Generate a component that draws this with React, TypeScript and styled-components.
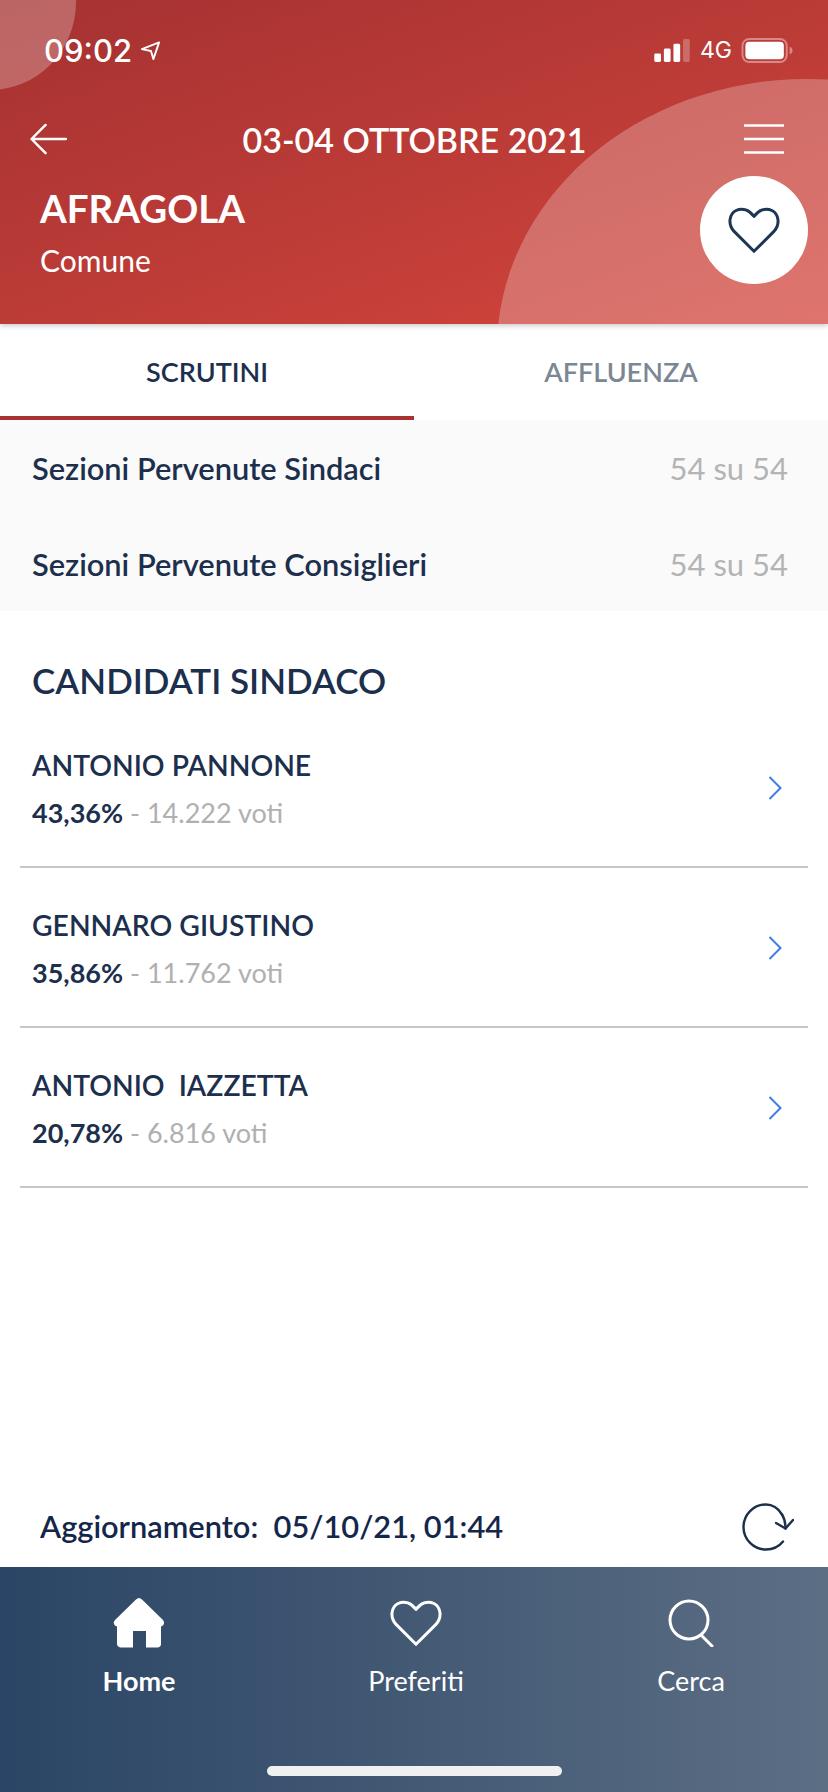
import styled, { createGlobalStyle } from "styled-components";

const candidates = [
  { name: "ANTONIO PANNONE", percent: "43,36%", votes: "14.222 voti" },
  { name: "GENNARO GIUSTINO", percent: "35,86%", votes: "11.762 voti" },
  { name: "ANTONIO  IAZZETTA", percent: "20,78%", votes: "6.816 voti" },
];

const GlobalStyle = createGlobalStyle`
  html, body {
    margin: 0;
    padding: 0;
    background: #fff;
  }
  * {
    box-sizing: border-box;
  }
`;

const LocationIcon = () => (
  <svg width="21" height="21" viewBox="0 0 22 22" fill="none">
    <path d="M2 9.500 20 2.500 14 20 11.500 11.500Z" stroke="#fff" strokeWidth="2" strokeLinejoin="round" />
  </svg>
);

const SignalIcon = () => (
  <svg width="37" height="23" viewBox="0 0 38 24">
    <rect x="0" y="15" width="7" height="9" rx="1.500" fill="#fff" />
    <rect x="10" y="10" width="7" height="14" rx="1.500" fill="#fff" />
    <rect x="20" y="5" width="7" height="19" rx="1.500" fill="#fff" />
    <rect x="30" y="0" width="7" height="24" rx="1.500" fill="#fff" fillOpacity="0.25" />
  </svg>
);

const BatteryIcon = () => (
  <svg width="53" height="25" viewBox="0 0 54 26">
    <rect x="1" y="1" width="46" height="24" rx="7" fill="none" stroke="#fff" strokeOpacity="0.4" strokeWidth="2" />
    <rect x="4" y="4" width="40" height="18" rx="4" fill="#fff" />
    <path d="M50 9c2 .5 3 2 3 4s-1 3.500-3 4z" fill="#fff" fillOpacity="0.4" />
  </svg>
);

const BackIcon = () => (
  <svg width="37" height="33" viewBox="0 0 38 34" fill="none">
    <path d="M37 16.500H2M16 2 1.500 16.500 16 31" stroke="#fff" strokeWidth="2.500" strokeLinecap="round" strokeLinejoin="round" />
  </svg>
);

const MenuIcon = () => (
  <svg width="40" height="30" viewBox="0 0 40 30">
    <path d="M0 1.500H40M0 15H40M0 28.500H40" stroke="#fff" strokeWidth="2.600" />
  </svg>
);

const HeartIcon = ({ size, color }: { size: number; color: string }) => (
  <svg width={size} height={size * 0.9} viewBox="0 0 52 47" fill="none">
    <path
      d="M26 44.500 6 24.500C-.5 17.500 1 7 8 3.500c6.500-3 13.500-.5 18 6 4.500-6.500 11.500-9 18-6 7 3.500 8.500 14 2 21z"
      stroke={color}
      strokeWidth="3"
      strokeLinejoin="round"
    />
  </svg>
);

const Chevron = () => (
  <svg width="14" height="24" viewBox="0 0 14 24" fill="none">
    <path d="M1.500 1 12.500 12 1.500 23" stroke="#3b7de0" strokeWidth="2" />
  </svg>
);

const RefreshIcon = () => (
  <svg width="52" height="48" viewBox="0 0 52 48" fill="none">
    <path d="M40 11.500C36 5 30 1.500 24 1.500 11.500 1.500 1.500 11.500 1.500 24S11.500 46.500 24 46.500c7 0 13-3 17-8" stroke="#1c2f4d" strokeWidth="2.400" strokeLinecap="round" />
    <path d="M51 17 43.500 25.500 34 20" stroke="#1c2f4d" strokeWidth="2.400" strokeLinecap="round" strokeLinejoin="round" />
    <path d="M40 11.500c2 3 3.500 8 3.500 14" stroke="#1c2f4d" strokeWidth="2.400" strokeLinecap="round" />
  </svg>
);

const HomeIcon = () => (
  <svg width="52" height="50" viewBox="0 0 52 50">
    <path
      d="M26 0c1 0 2 .500 3 1.500L50 22c2 2.500 1 6-2 6.500V46c0 2-1.500 3.500-3.500 3.500H33V33H20v16.500H8C6 49.500 4 48 4 46V28.500C1 28-.5 24.500 2 22L23 1.500C24 .500 25 0 26 0z"
      fill="#fff"
    />
  </svg>
);

const SearchIcon = () => (
  <svg width="46" height="48" viewBox="0 0 46 48" fill="none">
    <circle cx="21" cy="21" r="19" stroke="#fff" strokeWidth="3" />
    <path d="M33 36 44 47" stroke="#fff" strokeWidth="3" strokeLinecap="round" />
  </svg>
);

const App = () => {
  return (
    <Page>
      <GlobalStyle />
      <Header>
        <CornerBlob />
        <BigBlob />
        <StatusBar>
          <TimeGroup>
            <Time>09:02</Time>
            <LocationIcon />
          </TimeGroup>
          <StatusRight>
            <SignalIcon />
            <Network>4G</Network>
            <BatteryIcon />
          </StatusRight>
        </StatusBar>
        <TopNav>
          <BackIcon />
          <TopTitle>03-04 OTTOBRE 2021</TopTitle>
          <MenuIcon />
        </TopNav>
        <PlaceRow>
          <PlaceText>
            <PlaceName>AFRAGOLA</PlaceName>
            <PlaceType>Comune</PlaceType>
          </PlaceText>
          <FavButton>
            <HeartIcon size={52} color="#1c3654" />
          </FavButton>
        </PlaceRow>
      </Header>

      <Tabs>
        <Tab $active>SCRUTINI</Tab>
        <Tab>AFFLUENZA</Tab>
      </Tabs>

      <Summary>
        <SummaryRow>
          <SummaryLabel>Sezioni Pervenute Sindaci</SummaryLabel>
          <SummaryValue>54 su 54</SummaryValue>
        </SummaryRow>
        <SummaryRow>
          <SummaryLabel>Sezioni Pervenute Consiglieri</SummaryLabel>
          <SummaryValue>54 su 54</SummaryValue>
        </SummaryRow>
      </Summary>

      <Main>
        <SectionTitle>CANDIDATI SINDACO</SectionTitle>
        {candidates.map((c) => (
          <CandidateRow key={c.name}>
            <div>
              <CandidateName>{c.name}</CandidateName>
              <CandidateResult>
                <Percent>{c.percent}</Percent> - {c.votes}
              </CandidateResult>
            </div>
            <Chevron />
          </CandidateRow>
        ))}
      </Main>

      <UpdateBar>
        <UpdateText>Aggiornamento:&nbsp; 05/10/21, 01:44</UpdateText>
        <RefreshIcon />
      </UpdateBar>

      <BottomNav>
        <NavItem>
          <NavIconBox>
            <HomeIcon />
          </NavIconBox>
          <NavLabel $active>Home</NavLabel>
        </NavItem>
        <NavItem>
          <NavIconBox>
            <HeartIcon size={52} color="#fff" />
          </NavIconBox>
          <NavLabel>Preferiti</NavLabel>
        </NavItem>
        <NavItem>
          <NavIconBox>
            <SearchIcon />
          </NavIconBox>
          <NavLabel>Cerca</NavLabel>
        </NavItem>
        <HomeIndicator />
      </BottomNav>
    </Page>
  );
};

const font = `"Lato", "Noto Sans", sans-serif`;

const Page = styled.div`
  width: 828px;
  height: 1792px;
  display: flex;
  flex-direction: column;
  overflow: hidden;
  background: #fff;
  font-family: ${font};
`;

const Header = styled.header`
  position: relative;
  height: 324px;
  flex-shrink: 0;
  overflow: hidden;
  padding: 0 44px 0 30px;
  background: linear-gradient(160deg, #a53232 0%, #b93a36 45%, #d4463c 100%);
  box-shadow: 0 2px 5px rgba(0, 0, 0, 0.2);
  z-index: 1;
`;

const CornerBlob = styled.div`
  position: absolute;
  left: -96px;
  top: -86px;
  width: 172px;
  height: 176px;
  border-radius: 50%;
  background: rgba(255, 255, 255, 0.25);
`;

const BigBlob = styled.div`
  position: absolute;
  left: 497px;
  top: 79px;
  width: 620px;
  height: 540px;
  border-radius: 50%;
  background: rgba(255, 255, 255, 0.25);
`;

const StatusBar = styled.div`
  position: relative;
  display: flex;
  justify-content: space-between;
  align-items: center;
  height: 34px;
  margin: 33px -10px 0 0;
  padding-left: 14px;
`;

const TimeGroup = styled.div`
  display: flex;
  align-items: center;
  gap: 8px;
`;

const Time = styled.span`
  font-family: "Inter", sans-serif;
  font-size: 31px;
  font-weight: 500;
  color: #fff;
`;

const StatusRight = styled.div`
  display: flex;
  align-items: center;
  gap: 9px;
`;

const Network = styled.span`
  font-family: "Inter", sans-serif;
  font-size: 23px;
  color: #fff;
`;

const TopNav = styled.div`
  position: relative;
  display: flex;
  justify-content: space-between;
  align-items: center;
  height: 40px;
  margin-top: 52px;
`;

const TopTitle = styled.h1`
  margin: 0 0 0 18px;
  font-size: 34px;
  font-weight: 600;
  color: #fff;
`;

const PlaceRow = styled.div`
  position: relative;
  display: flex;
  justify-content: space-between;
  align-items: flex-start;
  margin: 17px -24px 0 10px;
`;

const PlaceText = styled.div`
  padding-top: 6px;
`;

const PlaceName = styled.div`
  font-size: 38.500px;
  font-weight: 700;
  line-height: 52px;
  color: #fff;
`;

const PlaceType = styled.div`
  font-size: 30px;
  line-height: 52px;
  color: #fff;
`;

const FavButton = styled.div`
  width: 108px;
  height: 108px;
  border-radius: 50%;
  background: #fff;
  display: flex;
  align-items: center;
  justify-content: center;
`;

const Tabs = styled.div`
  display: flex;
  height: 96px;
  flex-shrink: 0;
`;

const Tab = styled.div<{ $active?: boolean }>`
  flex: 1;
  display: flex;
  align-items: center;
  justify-content: center;
  padding-top: 2px;
  font-size: 27px;
  font-weight: 600;
  color: ${({ $active }) => ($active ? "#1c2f4d" : "#7b8794")};
  border-bottom: 4px solid ${({ $active }) => ($active ? "#a83232" : "transparent")};
`;

const Summary = styled.section`
  height: 191px;
  flex-shrink: 0;
  padding: 0 40px 0 32px;
  background: #fafafa;
`;

const SummaryRow = styled.div`
  display: flex;
  justify-content: space-between;
  align-items: center;
  height: 96px;
`;

const SummaryLabel = styled.span`
  font-size: 30.800px;
  font-weight: 600;
  color: #1c2f4d;
`;

const SummaryValue = styled.span`
  font-size: 31px;
  color: #b4b4b4;
`;

const Main = styled.main`
  flex: 1;
  padding: 45px 20px 0;
`;

const SectionTitle = styled.h2`
  margin: 0;
  padding-left: 12px;
  font-size: 35px;
  font-weight: 600;
  line-height: 48px;
  color: #1c2f4d;
`;

const CandidateRow = styled.div`
  display: flex;
  justify-content: space-between;
  align-items: center;
  height: 160px;
  padding: 2px 26px 0 12px;
  border-bottom: 2px solid #c4c8cb;

  &:first-of-type {
    height: 164px;
    padding-top: 6px;
  }
`;

const CandidateName = styled.div`
  font-size: 28.300px;
  font-weight: 600;
  line-height: 44px;
  white-space: pre;
  color: #1c2f4d;
`;

const CandidateResult = styled.div`
  margin-top: 6px;
  font-size: 27px;
  line-height: 40px;
  color: #b0b0b0;
`;

const Percent = styled.span`
  font-weight: 700;
  color: #1c2f4d;
`;

const UpdateBar = styled.div`
  display: flex;
  justify-content: space-between;
  align-items: center;
  height: 89px;
  flex-shrink: 0;
  padding: 8px 34px 0 40px;
`;

const UpdateText = styled.div`
  font-size: 30.800px;
  font-weight: 600;
  color: #14274a;
`;

const BottomNav = styled.nav`
  position: relative;
  display: grid;
  grid-template-columns: 278px 276px 274px;
  height: 225px;
  flex-shrink: 0;
  padding-top: 31px;
  background: linear-gradient(90deg, #2a4565 0%, #5c6e84 100%);
`;

const NavItem = styled.div`
  display: flex;
  flex-direction: column;
  align-items: center;
`;

const NavIconBox = styled.div`
  height: 50px;
  display: flex;
  align-items: center;
`;

const NavLabel = styled.div<{ $active?: boolean }>`
  margin-top: 15px;
  font-size: 27px;
  line-height: 36px;
  font-weight: ${({ $active }) => ($active ? 700 : 400)};
  color: #fff;
`;

const HomeIndicator = styled.div`
  position: absolute;
  left: 267px;
  bottom: 16px;
  width: 295px;
  height: 10px;
  border-radius: 5px;
  background: #f0f0f0;
`;

export default App;
